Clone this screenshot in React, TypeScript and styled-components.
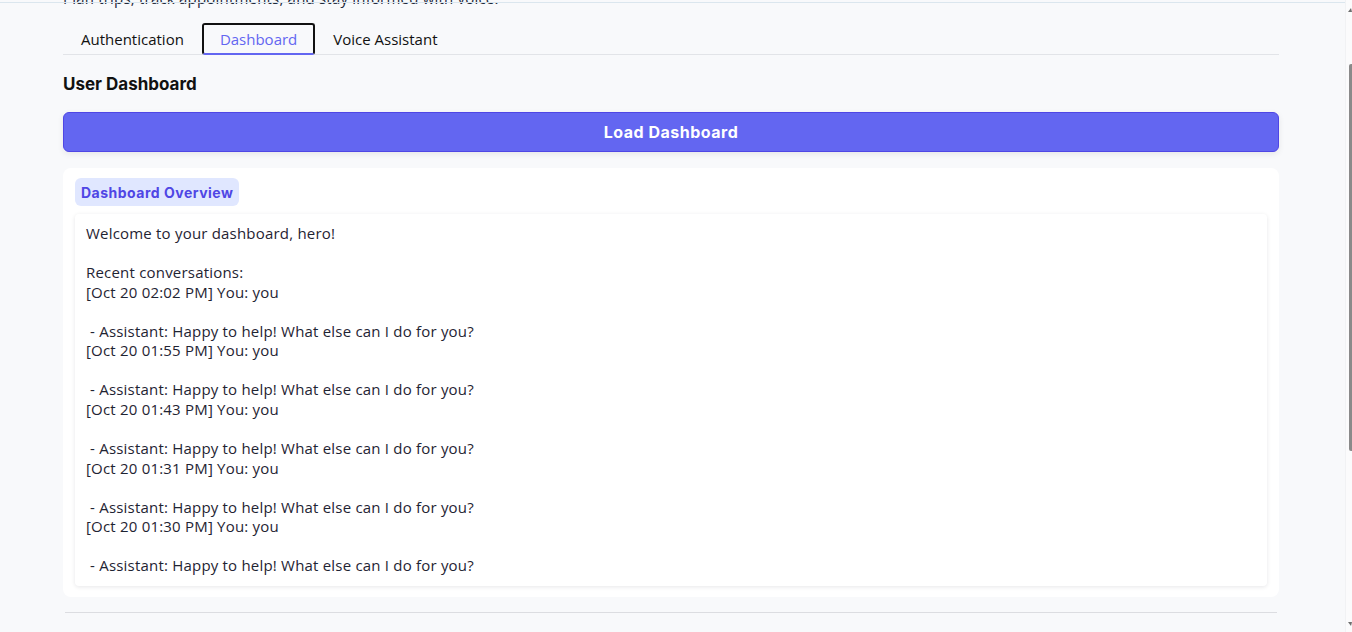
import React, { useLayoutEffect, useRef } from "react";
import styled, { createGlobalStyle } from "styled-components";

const GlobalStyle = createGlobalStyle`
  html, body { margin: 0; padding: 0; height: 100%; overflow: hidden; }
  body { background: #f8f9fb; font-family: "Open Sans", "Liberation Sans", sans-serif; color: #111827; }
  #root { height: 100%; }
`;

const Scroller = styled.div`
  height: 632px;
  overflow-y: scroll;
  background: #f8f9fb;
  scrollbar-width: none;
  &::-webkit-scrollbar { display: none; }
`;

const TopLine = styled.div`
  position: fixed;
  top: 2px;
  left: 0;
  right: 7px;
  height: 1px;
  background: #dbe6ee;
  pointer-events: none;
`;

const ScrollRail = styled.div`
  position: fixed;
  top: 0;
  right: 0;
  width: 7px;
  height: 632px;
  background: #fbfbfc;
  border-left: 1px solid #f1f2f4;
  box-sizing: border-box;
  pointer-events: none;
`;

const Arrow = styled.span<{ $down?: boolean }>`
  position: absolute;
  right: 0;
  ${(p) => (p.$down ? "bottom: 6px;" : "top: 8px;")}
  width: 0;
  height: 0;
  border-left: 3px solid transparent;
  border-right: 1px solid transparent;
  ${(p) =>
    p.$down ? "border-top: 4px solid #6f6f6f;" : "border-bottom: 4px solid #6f6f6f;"}
`;

const Thumb = styled.span`
  position: absolute;
  right: 0;
  top: 64px;
  width: 3px;
  height: 387px;
  background: #8a8a8a;
  border-radius: 2px 0 0 2px;
`;

const Main = styled.main`
  width: 1216px;
  margin: 0 0 0 63px;
  padding-top: 40px;
`;

const Title = styled.h1`
  margin: 0 0 8px;
  font-family: "Inter", sans-serif;
  font-size: 28px;
  line-height: 36px;
  font-weight: 700;
  color: #111827;
`;

const Subtitle = styled.p`
  margin: 0 0 15px;
  font-size: 15px;
  line-height: 20px;
  letter-spacing: 0.2px;
  color: #1e293b;
`;

const TabList = styled.div`
  display: flex;
  border-bottom: 1px solid #e2e4e8;
`;

const Tab = styled.button<{ $active?: boolean }>`
  height: 32px;
  padding: 0 16px;
  margin-bottom: -1px;
  font-family: "Open Sans", sans-serif;
  font-size: 15px;
  background: transparent;
  color: ${(p) => (p.$active ? "#6366f1" : "#111")};
  border: 2px solid ${(p) => (p.$active ? "#111" : "transparent")};
  border-bottom-color: ${(p) => (p.$active ? "#6366f1" : "transparent")};
  border-radius: 3px;
  cursor: pointer;
`;

const SectionTitle = styled.h2`
  margin: 18px 0 0;
  font-family: "Inter", sans-serif;
  font-size: 17px;
  line-height: 22px;
  font-weight: 700;
  color: #111;
`;

const PrimaryButton = styled.button`
  display: block;
  width: 100%;
  height: 40px;
  margin-top: 17px;
  border: 1px solid #4f46e5;
  border-radius: 6px;
  background: #6366f1;
  color: #fff;
  font-family: "Inter", sans-serif;
  font-size: 16px;
  letter-spacing: 0.5px;
  font-weight: 700;
  box-shadow: 0 2px 6px rgba(0, 0, 0, 0.08);
  cursor: pointer;
`;

const Card = styled.section`
  margin-top: 16px;
  background: #fff;
  border-radius: 8px;
  padding: 10px 12px 11px;
  display: flex;
  flex-direction: column;
  align-items: flex-start;
  gap: 8px;
`;

const Badge = styled.span`
  display: inline-flex;
  align-items: center;
  height: 28px;
  padding: 0 6px;
  border-radius: 6px;
  background: #e0e7ff;
  color: #4f46e5;
  font-family: "Inter", sans-serif;
  font-size: 14px;
  letter-spacing: 0.5px;
  font-weight: 700;
`;

const Output = styled.pre`
  align-self: stretch;
  margin: 0;
  padding: 10px 11px 10px;
  background: #fff;
  border-radius: 4px;
  box-shadow: 0 1px 4px rgba(15, 23, 42, 0.1);
  font-family: "Open Sans", sans-serif;
  font-size: 15px;
  letter-spacing: 0.2px;
  line-height: 19.55px;
  color: #1f2433;
  white-space: pre-wrap;
`;

const Divider = styled.hr`
  margin: 15px 2px 0;
  border: none;
  border-top: 1px solid #dcdde1;
`;

const Footer = styled.footer`
  padding: 48px 0 260px;
  font-size: 13px;
  color: #6b7280;
`;

const entries = ["02:02", "01:55", "01:43", "01:31", "01:30"];
const dashboardText =
  "Welcome to your dashboard, hero!\n\nRecent conversations:\n" +
  entries
    .map(
      (t) =>
        `[Oct 20 ${t} PM] You: you\n\n - Assistant: Happy to help! What else can I do for you?`
    )
    .join("\n");

export default function App() {
  const scroller = useRef<HTMLDivElement>(null);
  const tabs = useRef<HTMLDivElement>(null);

  useLayoutEffect(() => {
    if (scroller.current && tabs.current) {
      scroller.current.scrollTop = tabs.current.offsetTop - 23;
    }
  }, []);

  return (
    <>
      <GlobalStyle />
      <Scroller ref={scroller} style={{ position: "relative" }}>
        <Main>
          <Title>Voice Assistant</Title>
          <Subtitle>Plan trips, track appointments, and stay informed with voice.</Subtitle>
          <TabList ref={tabs}>
            <Tab>Authentication</Tab>
            <Tab $active>Dashboard</Tab>
            <Tab>Voice Assistant</Tab>
          </TabList>
          <SectionTitle>User Dashboard</SectionTitle>
          <PrimaryButton>Load Dashboard</PrimaryButton>
          <Card>
            <Badge>Dashboard Overview</Badge>
            <Output>{dashboardText}</Output>
          </Card>
          <Divider />
          <Footer>Voice Assistant · Your personal helper</Footer>
        </Main>
      </Scroller>
      <TopLine />
      <ScrollRail>
        <Arrow />
        <Thumb />
        <Arrow $down />
      </ScrollRail>
    </>
  );
}
